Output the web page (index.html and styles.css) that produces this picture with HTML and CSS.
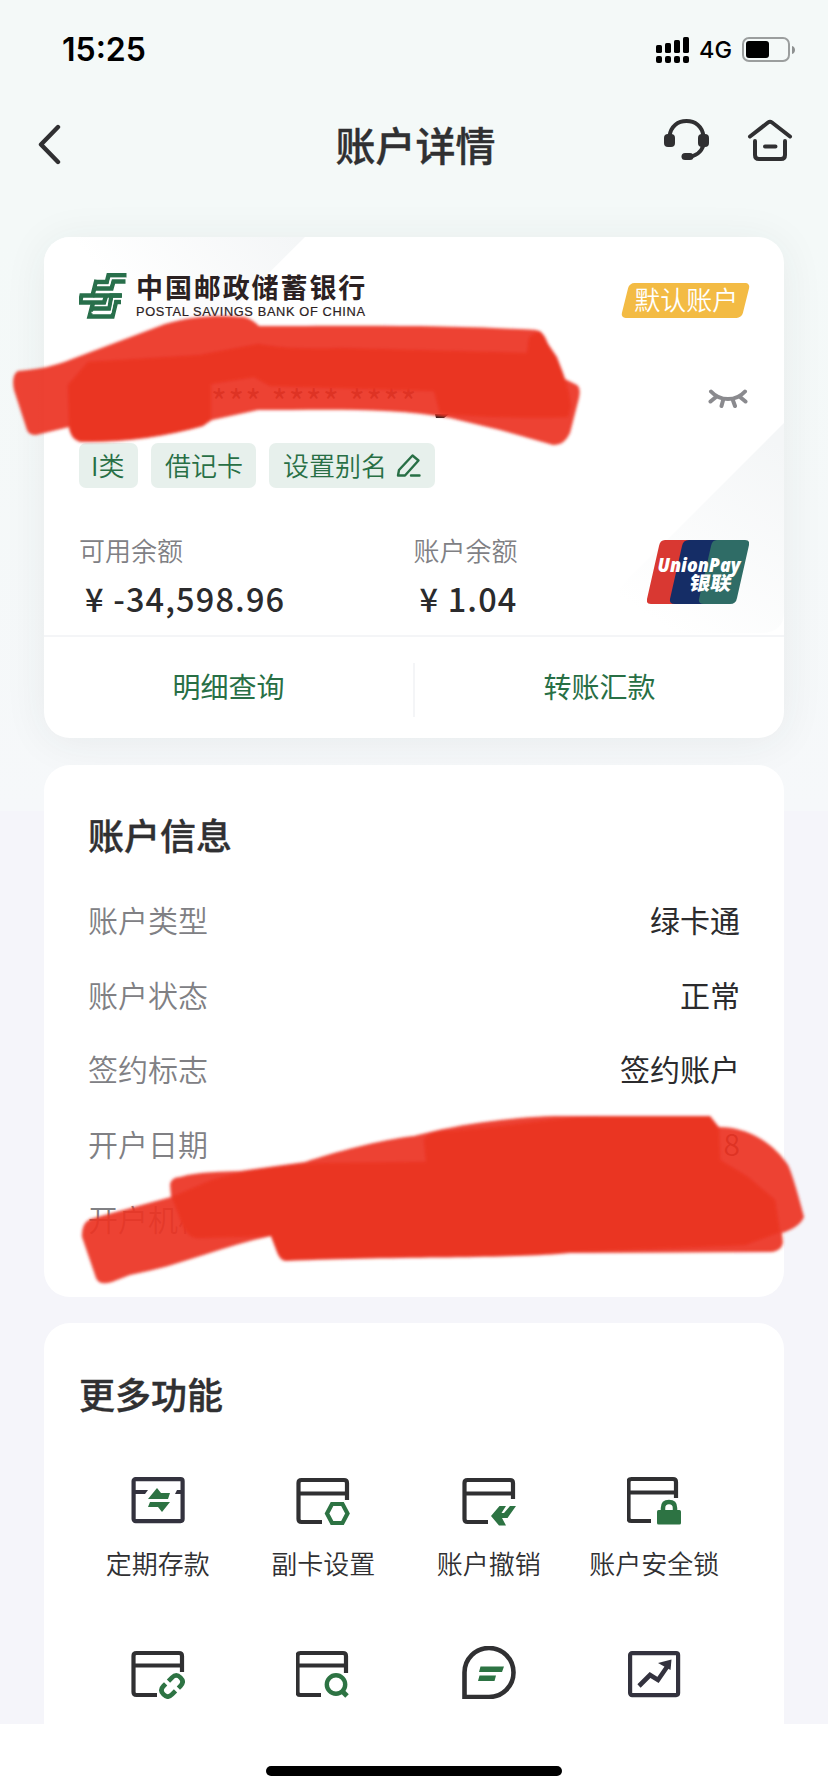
FILE: index.html
```html
<!DOCTYPE html>
<html lang="zh-CN">
<head>
<meta charset="utf-8">
<title>账户详情</title>
<link rel="stylesheet" href="styles.css">
</head>
<body>
<div class="screen">
  <div class="status">
    <span class="time">15:25</span>
    <div class="status-right">
      <svg class="signal" viewBox="0 0 33 26" width="33" height="26"><g fill="#000"><rect x="0" y="8" width="6" height="8" rx="1.6"/><rect x="9" y="6" width="6" height="10" rx="1.6"/><rect x="18" y="3" width="6" height="13" rx="1.6"/><rect x="27" y="0" width="6" height="16" rx="1.6"/><rect x="0" y="19" width="6" height="7" rx="2"/><rect x="9" y="19" width="6" height="7" rx="2"/><rect x="18" y="19" width="6" height="7" rx="2"/><rect x="27" y="19" width="6" height="7" rx="2"/></g></svg>
      <span class="net">4G</span>
      <svg class="battery" viewBox="0 0 54 26" width="54" height="26"><rect x="1" y="1" width="46" height="23" rx="6" fill="none" stroke="#9b9e9e" stroke-width="2"/><rect x="4" y="4" width="23" height="17" rx="3"/><path d="M50 9c4 1 4 7 0 8z" fill="#8e9191"/></svg>
    </div>
  </div>
  <header class="nav">
    <svg class="back" viewBox="0 0 24 42" width="24" height="42"><path d="M20 3 3 20.500 20 38" fill="none" stroke="#303032" stroke-width="4.400" stroke-linecap="round" stroke-linejoin="round"/></svg>
    <h1>账户详情</h1>
    <div class="nav-icons">
      <svg viewBox="0 0 45 42" width="45" height="42"><path d="M5.500 17C7 7 14 2 22.500 2S38 7 39.500 17M39.500 26c-2 7-8 11.500-16 12" fill="none" stroke="#303032" stroke-width="4"/><rect x="0" y="15" width="11" height="13" rx="4" fill="#303032"/><rect x="34" y="15" width="11" height="13" rx="4" fill="#303032"/><rect x="17.500" y="34" width="12" height="7" rx="3.500" fill="#303032"/></svg>
      <svg viewBox="0 0 46 42" width="46" height="42"><g fill="none" stroke="#303032" stroke-width="4" stroke-linecap="round" stroke-linejoin="round"><path d="M3 17.500 21 3.500q2-1.500 4 0L43 17.500M8 22v14q0 4 4 4h22q4 0 4-4V22M18 27.500h10.500"/></g></svg>
    </div>
  </header>

  <main>
    <section class="card account">
      <div class="face">
        <svg class="tint" viewBox="0 0 740 399" width="740" height="399">
          <defs>
            <linearGradient id="ta" x1="250" y1="0" x2="120" y2="110" gradientUnits="userSpaceOnUse"><stop stop-color="#f4f6f7"/><stop offset="1" stop-color="#fff"/></linearGradient>
            <linearGradient id="tb" x1="740" y1="210" x2="620" y2="390" gradientUnits="userSpaceOnUse"><stop stop-color="#f4f6f7"/><stop offset="1" stop-color="#fff"/></linearGradient>
          </defs>
          <path d="M0 0H261L100 160H0z" fill="url(#ta)"/>
          <path d="M740 186V375q0 21-24 21H530z" fill="url(#tb)"/>
        </svg>
        <div class="brand-row">
          <div class="brand">
            <svg class="logo" viewBox="0 0 48 46" width="48" height="46">
              <g fill="none" stroke="#286f4b" stroke-width="4.400">
                <path d="M47.500 2.200H29.500L27.800 9H17.500"/>
                <path d="M46.500 8.500H34.500L32.500 15.500H15.500"/>
                <path d="M17.500 6.800 13.500 22.500H2.500L1 29.500H25L27.500 21.500"/>
                <path d="M14.500 22.500H27.500L42.500 22.500"/>
                <path d="M43 22.500H32.500L30.500 35.500H13.500"/>
                <path d="M42 29H37L33.500 43.500H10.500L14 30"/>
              </g>
              <g fill="none" stroke="#fff" stroke-width="1.300"><path d="M47 5.300H32L30.200 12.300H18M42 25.700H34.800L32 39.500H12.500"/></g>
            </svg>
            <div class="brand-text"><b>中国邮政储蓄银行</b><span>POSTAL SAVINGS BANK OF CHINA</span></div>
          </div>
          <div class="badge"><span>默认账户</span></div>
        </div>
        <div class="number-row">
          <span class="number">*** **** ****</span>
          <svg class="eye" viewBox="0 0 40 20" width="40" height="20"><g fill="none" stroke="#8a8a8e" stroke-width="4" stroke-linecap="round"><path d="M3 2.500c9 10 25 10 34 0M8 8 2.500 12.500M32 8l5.500 4.500M15 11.500 13.500 17M25 11.500l2 5.500"/></g></svg>
        </div>
        <div class="tags">
          <span class="tag t1"><em>I类</em></span>
          <span class="tag t2"><em>借记卡</em></span>
          <span class="tag t3"><em>设置别名</em><svg viewBox="0 0 25 25" width="25" height="25"><g fill="none" stroke="#286f45" stroke-width="2.400" stroke-linejoin="round" stroke-linecap="round"><path d="M2 22.500 3 17 16.500 2.500 22.500 7.500 9 22.500zM15 22.500h8.500"/></g></svg></span>
        </div>
        <div class="balances">
          <div class="bal"><span class="lab">可用余额</span><span class="amt">¥ -34,598.96</span></div>
          <div class="bal"><span class="lab">账户余额</span><span class="amt">¥ 1.04</span></div>
          <svg class="union" viewBox="0 0 102 64" width="102" height="64">
            <path d="M18 0H45L30 64H4Q-1 64 0 59L12 6Q13 0 18 0z" fill="#d93832"/>
            <path d="M42 0H75L60 64H28Q22 64 23 59L35 6Q36 0 42 0z" fill="#152d66"/>
            <path d="M70 0H98Q103 0 102 5L90 58Q89 64 83 64H57Q51 64 52 59L64 6Q65 0 70 0z" fill="#2f6c66"/>
            <text class="up-en" x="10.500" y="31.500" textLength="83" lengthAdjust="spacingAndGlyphs">UnionPay</text>
            <text class="up-cn" transform="translate(41.500 50) skewX(-10)" textLength="42" lengthAdjust="spacingAndGlyphs">银联</text>
          </svg>
        </div>
      </div>
      <div class="actions"><a>明细查询</a><i></i><a>转账汇款</a></div>
    </section>

    <section class="card info">
      <h2>账户信息</h2>
      <dl>
        <div><dt>账户类型</dt><dd>绿卡通</dd></div>
        <div><dt>账户状态</dt><dd>正常</dd></div>
        <div><dt>签约标志</dt><dd>签约账户</dd></div>
        <div><dt>开户日期</dt><dd class="thin">8</dd></div>
        <div><dt>开户机构</dt><dd></dd></div>
      </dl>
    </section>

    <section class="card more">
      <h2>更多功能</h2>
      <div class="grid">
        <div class="item"><svg viewBox="0 0 54 50" width="54" height="50"><g fill="none" stroke="#33323e" stroke-width="4.200"><rect x="2.600" y="3.100" width="49" height="42" rx="2"/></g><path d="M4 14h13l-3 4H4zM46 14h4v4h-6z" fill="#33323e"/><path d="M17 23 26 12l4 5h9l-2 6zM19 26h20l-8 10-4-5H17z" fill="#2d7343"/></svg><span>定期存款</span></div>
        <div class="item"><svg viewBox="0 0 54 50" width="54" height="50"><path d="M51 24V7q0-3-3-3H5.500q-3 0-3 3v36q0 3 3 3H26M4 17.500h47" fill="none" stroke="#303032" stroke-width="4.200"/><path d="M34.500 28.500h10.500l5 9.500-5 9.500H34.500L29.500 38z" fill="none" stroke="#2d7343" stroke-width="4.200" transform="translate(1.500 -.5)"/></svg><span>副卡设置</span></div>
        <div class="item"><svg viewBox="0 0 54 50" width="54" height="50"><path d="M51 23V7q0-3-3-3H5.500q-3 0-3 3v36q0 3 3 3H26M4 17.500h47" fill="none" stroke="#303032" stroke-width="4.200"/><path d="M29 40 37.500 30H44l-4.500 7H42l6-7h6L45.500 42H40l4 7.500H37z" fill="#2d7343"/></svg><span>账户撤销</span></div>
        <div class="item"><svg viewBox="0 0 54 50" width="54" height="50"><path d="M49 22V6q0-3-3-3H4.500q-3 0-3 3v36q0 3 3 3H24M3 16.500h46" fill="none" stroke="#303032" stroke-width="4.200"/><rect x="30" y="34" width="24" height="14.500" rx="1.500" fill="#2d7343"/><path d="M36 36v-4q0-6 6-6t6 6v4" fill="none" stroke="#2d7343" stroke-width="4.500"/></svg><span>账户安全锁</span></div>
        <div class="item"><svg viewBox="0 0 54 50" width="54" height="50"><path d="M51 23V7q0-3-3-3H5.500q-3 0-3 3v36q0 3 3 3H26M4 16.500h47" fill="none" stroke="#303032" stroke-width="4.200"/><g transform="rotate(-45 41 37)" fill="none" stroke="#2d7343" stroke-width="4.600"><path d="M38 31h-3q-6 0-6 6t6 6h5M44 43h3q6 0 6-6t-6-6h-5"/></g></svg></div>
        <div class="item"><svg viewBox="0 0 54 50" width="54" height="50"><path d="M50 24V7q0-3-3-3H4.500q-3 0-3 3v36q0 3 3 3H25M3 16.500h47" fill="none" stroke="#303032" stroke-width="4.200"/><circle cx="40" cy="35.500" r="9.200" fill="none" stroke="#2d7343" stroke-width="4.400"/><path d="m45 41 6 6" stroke="#2d7343" stroke-width="5"/></svg></div>
        <div class="item"><svg viewBox="0 -3 54 53" width="54" height="53"><path d="M2.500 48V23.500A24.500 24.500 0 1 1 27 48z" fill="none" stroke="#303032" stroke-width="4.600"/><path d="M18.500 17.500H42L40 23H17zM17.500 26.500H34L32.500 32H16z" fill="#2d7343"/></svg></div>
        <div class="item"><svg viewBox="0 0 54 50" width="54" height="50"><rect x="3.100" y="4.100" width="48" height="42" rx="2" fill="none" stroke="#33323e" stroke-width="4.200"/><path d="M12 37 23 26l8 5L42 15" fill="none" stroke="#33323e" stroke-width="4.600"/><path d="m31 14 13.500-3.500L43.500 21z" fill="#33323e"/></svg></div>
      </div>
    </section>
  </main>
  <footer class="home"><span></span></footer>

  <svg class="marker" viewBox="0 0 828 1792" width="828" height="1792">
    <defs><filter id="soft" x="-5%" y="-10%" width="110%" height="120%"><feGaussianBlur stdDeviation="1.500"/></filter></defs>
    <path d="M435 414h14l-5 4h-8z" fill="#222"/>
    <g filter="url(#soft)">
      <path opacity=".93" fill="#ec3323" d="M18 371C40 369 55 366 72 359L165 324C195 315 222 315 244 317Q252 319 259 326C330 326 440 324 536 330Q544 331 548 344L557 357 565 379 577 385Q581 388 579 398L570 433Q564 446 553 445L500 430 450 418C390 407 320 410 258 410L212 420 203 426C165 437 120 443 80 442Q70 439 69 427L40 434Q30 437 27 430L14 390Q11 375 18 371z"/>
      <path fill="#ea3424" d="M68 385 88 362 200 355 258 344Q290 350 340 348L527 353 529 337 540 331 548 344 557 359Q568 382 571 406L568 417Q490 419 440 413L434 391 270 386 254 377 211 384 211 418 203 426C165 437 120 442 80 441Q70 436 69 427z"/>
      <path opacity=".93" fill="#ec3323" d="M90 1219 171 1197 170 1184Q172 1177 180 1177C200 1171 225 1172 240 1171L305 1162C335 1152 380 1140 414 1136C465 1122 530 1115 570 1116H710L719 1127C750 1127 775 1145 788 1165Q793 1175 804 1217Q800 1227 782 1233L783 1243Q781 1251 772 1252L570 1253C510 1259 400 1256 286 1261Q280 1261 277 1252L271 1236C225 1245 180 1266 130 1275L112 1282Q99 1286 96 1278L82 1237Q81 1224 90 1219z"/>
      <path fill="#ea3424" d="M172 1197 207 1182C240 1170 290 1164 330 1163L426 1162 424 1140Q428 1131 450 1131C500 1128 560 1117 600 1116H710L719 1130 720 1160 748 1177 775 1200 780 1232 745 1245 570 1252C510 1258 400 1256 286 1260L278 1254 271 1236 197 1238Q188 1237 183 1226z"/>
    </g>
  </svg>
</div>
</body>
</html>
```
FILE: styles.css
```css
* { box-sizing: border-box; }
body { margin: 0; font-family: "Noto Sans CJK SC", sans-serif; color: #303032; }
.screen {
  position: relative;
  width: 828px;
  height: 1792px;
  overflow: hidden;
  display: flex;
  flex-direction: column;
  background: linear-gradient(#f4f9f8 0, #f4f9f8 240px, #f6f8fa 811px, #f5f5fa 811px);
}
h1, h2, dl, dd { margin: 0; }
svg { display: block; flex: none; }
.status { height: 100px; padding: 0 32px 0 62px; display: flex; align-items: center; justify-content: space-between; }
.time { font: 600 32px/40px Inter, sans-serif; color: #000; letter-spacing: 0; }
.status-right { display: flex; align-items: center; }
.net { width: 53px; padding-left: 10px; font: 500 23.500px/30px Inter, sans-serif; color: #000; }
.nav { height: 90px; padding: 0 35px 0 38px; display: grid; grid-template-columns: 150px 1fr 150px; align-items: center; }
.back { margin-bottom: 1px; }
.nav h1 { font-size: 40px; line-height: 60px; font-weight: 500; text-align: center; margin-top: -2px; -webkit-text-stroke: 0.4px; }
.nav-icons { display: flex; justify-content: flex-end; gap: 38px; margin: 0 0 10px; }
main { flex: none; height: 1534px; padding: 47px 44px 0; overflow: hidden; }
.card { background: #fff; border-radius: 26px; }
.account { height: 501px; box-shadow: 0 4px 44px rgba(40, 50, 60, 0.07); }
.face { position: relative; height: 400px; padding: 34px 35px 0; border-bottom: 2px solid #f4f5f7; border-radius: 26px 26px 0 0; overflow: hidden; }
.tint { position: absolute; inset: 0; }
.brand-row, .number-row, .tags, .balances { position: relative; }
.brand-row { display: flex; justify-content: space-between; height: 60px; }
.brand { display: flex; gap: 9px; }
.logo { margin-top: 2px; }
.brand-text { display: flex; flex-direction: column; color: #2b2122; }
.brand-text b { font-size: 27px; line-height: 34px; font-weight: 700; letter-spacing: 1.9px; margin-top: -1px; }
.brand-text span { font: 12.800px/16px "Liberation Sans", sans-serif; white-space: nowrap; letter-spacing: 0.640px; -webkit-text-stroke: 0.2px; }
.badge { width: 121px; height: 35px; margin: 12px 3px 0 0; border-radius: 5px; transform: skewX(-14deg); background: #f3bb44; color: #fff; display: flex; align-items: center; justify-content: center; }
.badge span { transform: skewX(14deg); font-size: 26px; line-height: 34px; font-weight: 350; margin: -4px 0 0 1px; white-space: nowrap; }
.number-row { display: flex; justify-content: space-between; height: 112px; padding: 56px 1px 0 132px; }
.number { font-size: 34px; line-height: 28px; letter-spacing: 1.300px; color: #303032; }
.eye { margin-top: 2px; }
.tags { display: flex; gap: 13px; height: 45px; }
.tag { display: flex; align-items: center; height: 45px; padding: 0 14px; border-radius: 7px; background: #e7f0ec; color: #286f45; font-size: 26px; font-weight: 350; white-space: nowrap; }
.tag em { font-style: normal; margin-top: -3px; }
.t1 { width: 59px; padding-left: 12px; }
.t2 { width: 105px; }
.t3 { width: 166px; gap: 9px; }
.balances { display: flex; margin-top: 39px; }
.bal { width: 335px; display: flex; flex-direction: column; white-space: nowrap; }
.lab { font-size: 26px; line-height: 46px; font-weight: 350; color: #808084; }
.amt { font-size: 32.500px; line-height: 48px; margin-top: 1px; font-weight: 500; letter-spacing: 1.150px; padding-left: 6px; color: #2b2b2d; }
.union { margin: 13px 0 0 -101px; }
.up-en { font: italic 800 20px "Open Sans", sans-serif; fill: #fff; }
.up-cn { font: 900 19px "Noto Sans CJK SC", sans-serif; fill: #fff; }
.actions { height: 101px; display: grid; grid-template-columns: 1fr 2px 1fr; align-items: center; text-align: center; }
.actions a { font-size: 28px; line-height: 40px; font-weight: 400; color: #286f45; margin-top: -4px; }
.actions i { height: 54px; background: #f4f5f7; margin-top: 5px; }
.info { height: 532px; margin-top: 27px; padding: 42px 44px 0; }
.card h2 { font-size: 36px; line-height: 54px; font-weight: 500; -webkit-text-stroke: 0.4px; }
.info dl { margin-top: 21px; }
.info dl div { height: 74.600px; display: flex; align-items: center; justify-content: space-between; font-size: 30px; line-height: 40px; }
.info dt { color: #808084; font-weight: 350; }
.info dd { color: #2b2b2d; }
.info .thin { font-weight: 350; }
.more { height: 460px; margin-top: 26px; padding: 43px 35px 0; }
.grid { margin: 56px 8px 0 -4px; width: 662px; display: grid; grid-template-columns: repeat(4, 1fr); grid-auto-rows: 173px; justify-items: center; }
.item { display: flex; flex-direction: column; align-items: center; width: 165px; }
.item span { font-size: 26px; line-height: 38px; margin-top: 18px; white-space: nowrap; font-weight: 350; }
.item:nth-child(7) svg { margin-top: -3px; }
.home { height: 68px; background: #fff; display: flex; justify-content: center; padding-top: 42px; }
.home span { width: 296px; height: 10px; border-radius: 5px; background: #000; }
.marker { position: absolute; left: 0; top: 0; pointer-events: none; }
```
